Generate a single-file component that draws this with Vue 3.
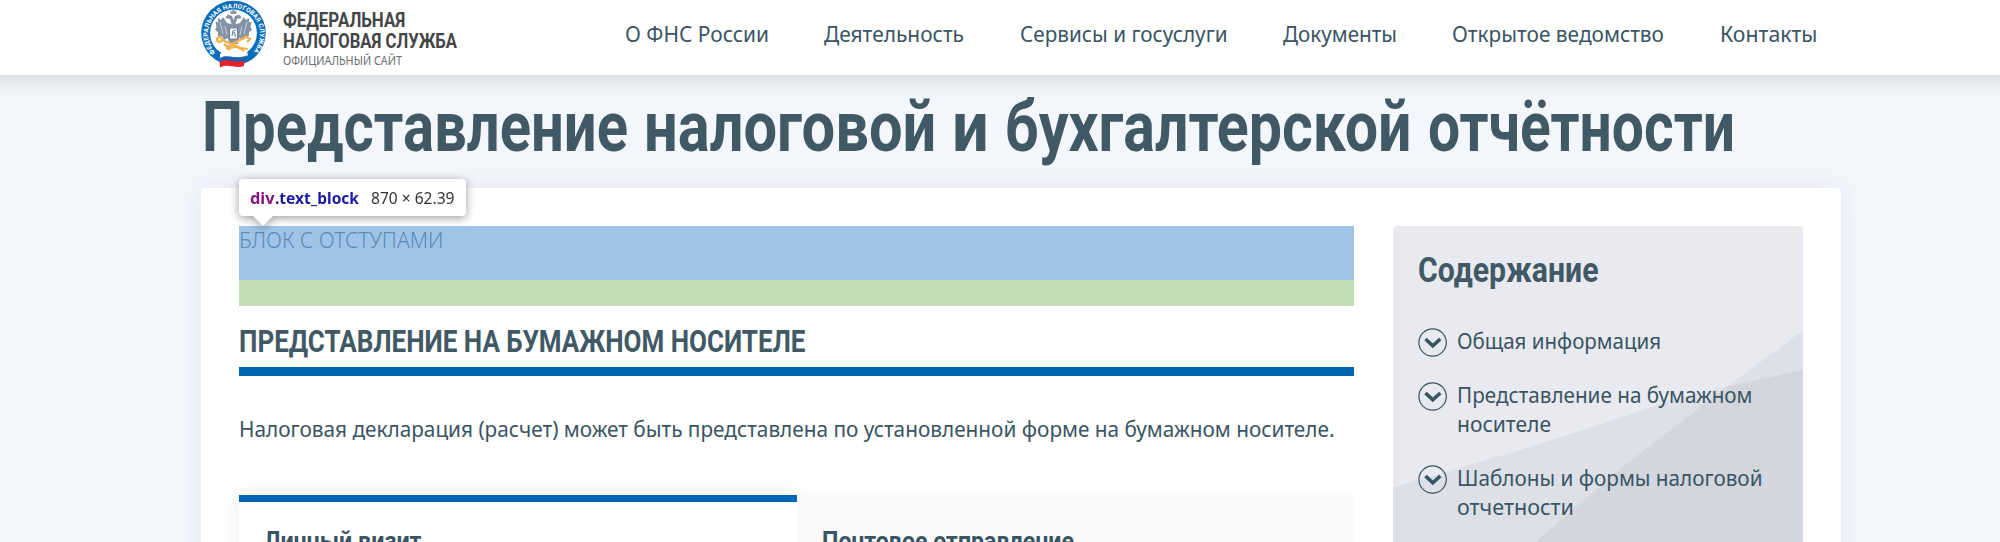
<script setup>
import { h } from 'vue'

// One line of text set to an exact measure
const FitText = (props) =>
  h('svg', { class: 'fit', width: props.w, height: props.h }, [
    h('text', {
      x: 0,
      y: props.base,
      'font-size': props.size,
      textLength: props.w,
      lengthAdjust: 'spacingAndGlyphs'
    }, props.text)
  ])
FitText.props = ['w', 'h', 'base', 'size', 'text']

const nav = [
  { text: 'О ФНС России', w: 144 },
  { text: 'Деятельность', w: 140 },
  { text: 'Сервисы и госуслуги', w: 207.6 },
  { text: 'Документы', w: 114 },
  { text: 'Открытое ведомство', w: 212 },
  { text: 'Контакты', w: 97.5 }
]

const titleWords = [
  { text: 'Представление', w: 426 },
  { text: 'налоговой', w: 292.3 },
  { text: 'и', w: 36.8 },
  { text: 'бухгалтерской', w: 406.5 },
  { text: 'отчётности', w: 307 }
]

const contents = [
  { lines: [{ text: 'Общая информация', w: 204 }] },
  { lines: [{ text: 'Представление на бумажном', w: 295.5 }, { text: 'носителе', w: 94 }] },
  { lines: [{ text: 'Шаблоны и формы налоговой', w: 305.5 }, { text: 'отчетности', w: 117 }] }
]
</script>

<template>
  <div class="page">
    <header class="header">
      <svg class="emblem" width="66" height="70" viewBox="0 0 66 70">
        <defs>
          <path id="ring" d="M14.5 52.5 A26 26 0 1 1 51.5 52.5" />
        </defs>
        <circle cx="32.5" cy="33" r="32.3" fill="#0a6fbb" />
        <circle cx="32.5" cy="33" r="23.4" fill="#fff" />
        <text class="ring-text" textLength="120" lengthAdjust="spacingAndGlyphs">
          <textPath href="#ring" textLength="120">ФЕДЕРАЛЬНАЯ НАЛОГОВАЯ СЛУЖБА</textPath>
        </text>
        <g fill="#8593a6">
          <path d="M30 24 L26 23 L22 17 L20 20 L17 18 L17 22 L14.5 22 L15.5 27 L14 30 L17 32 L17 36 L21 36 L23 40 L27 38 L28 44 L37 44 L38 38 L42 40 L44 36 L48 36 L48 32 L51 30 L49.5 27 L50.5 22 L48 22 L48 18 L45 20 L43 17 L39 23 L35 24 Z" />
          <path d="M31 26 L29 19 L24 18 L27 14.5 L31 16 L32.5 20 L34 16 L38 14.5 L41 18 L36 19 L34 26 Z" />
          <path d="M30 14 L29 10.5 L31 11.5 L32.5 9 L34 11.5 L36 10.5 L35 14 Z" />
        </g>
        <path d="M19 22 L22 34 M46 22 L43 34 M24 26 L26 35 M41 26 L39 35" stroke="#c8d0da" stroke-width="1" />
        <rect x="28.5" y="28" width="8" height="11" fill="#fff" stroke="#6f7f93" stroke-width="1" />
        <path d="M31 36 L32 31 L35 30 M33 32 L34.5 37" stroke="#7e8da0" stroke-width="1.3" fill="none" />
        <g fill="none" stroke="#efb04a" stroke-width="2.2">
          <circle cx="18.5" cy="39.5" r="2.4" />
          <path d="M21 40 L40 48 L47 49 M25 49 L31 44 L45 37 M27 50 C31 46 37 46 43 51 M44 36 L49 39 L46 42 M23 44 L29 48" />
        </g>
        <path d="M19 54 C26 48 34 57 46 51 L47 56 C39 61 30 53 19 59 Z" fill="#fff" />
        <path d="M19 58 C27 53 35 61 46.5 55 L46.5 60 C37 65 29 57 19 62.5 Z" fill="#1b62ae" />
        <path d="M18.5 62 C27 57 35 64 43.5 60.5 L43 66 C34 69 27 63 19 67.5 Z" fill="#e8202b" />
      </svg>
      <div class="brand">
        <FitText class="brand-name" text="ФЕДЕРАЛЬНАЯ" :w="122.3" :h="21" :base="14.7" :size="19.7" />
        <FitText class="brand-name" text="НАЛОГОВАЯ СЛУЖБА" :w="174" :h="22" :base="14.7" :size="19.7" />
        <FitText class="brand-note" text="ОФИЦИАЛЬНЫЙ САЙТ" :w="119" :h="14" :base="9.5" :size="11.8" />
      </div>
      <nav class="nav">
        <a v-for="item in nav" :key="item.text">
          <FitText :text="item.text" :w="item.w" :h="34" :base="23.6" :size="21.8" />
        </a>
      </nav>
    </header>

    <h1 class="title">
      <FitText v-for="word in titleWords" :key="word.text" :text="word.text" :w="word.w" :h="113" :base="75.7" :size="70" />
    </h1>

    <main class="card">
      <section class="main">
        <div class="text-block">
          <FitText text="БЛОК С ОТСТУПАМИ" :w="204.500" :h="34" :base="22" :size="21.8" />
          <div class="tooltip">
            <FitText class="tag" text="div" :w="24.5" :h="36" :base="25.300" :size="16.3" />
            <FitText class="cls" text=".text_block" :w="84" :h="36" :base="25.300" :size="16.3" />
            <FitText class="dims" text="870 × 62.39" :w="83.5" :h="36" :base="25.300" :size="16.3" />
          </div>
        </div>
        <div class="block-margin"></div>
        <h2 class="subtitle">
          <FitText text="ПРЕДСТАВЛЕНИЕ НА БУМАЖНОМ НОСИТЕЛЕ" :w="566.5" :h="61" :base="45.7" :size="32" />
        </h2>
        <p class="para">
          <FitText
            text="Налоговая декларация (расчет) может быть представлена по установленной форме на бумажном носителе."
            :w="1095.500" :h="119" :base="60.5" :size="21.8"
          />
        </p>
        <div class="tabs">
          <div class="tab active">
            <FitText text="Личный визит" :w="157.5" :h="40" :base="26.500" :size="26" />
          </div>
          <div class="tab">
            <FitText text="Почтовое отправление" :w="252" :h="40" :base="26.500" :size="26" />
          </div>
        </div>
      </section>

      <aside class="side">
        <svg class="facets" width="410" height="316" viewBox="0 0 410 316">
          <path d="M0 261.500 L50 247 L120 226 L200 201 L285 172 L335 160 L410 104.500 V316 H0 Z" fill="#dde0e7" />
          <path d="M142.500 316 L227 243 L310 179 L335 160 L410 144 V316 Z" fill="#d3d6dd" />
        </svg>
        <h3 class="side-title">
          <FitText text="Содержание" :w="180.5" :h="50" :base="37.3" :size="35" />
        </h3>
        <ul class="contents">
          <li v-for="item in contents" :key="item.lines[0].text">
            <svg class="chevron" width="30" height="29" viewBox="0 0 30 29">
              <circle cx="14.6" cy="14.5" r="13.7" />
              <path d="M7.5 11 L14.8 17.8 L22.3 11" />
            </svg>
            <div class="lines">
              <FitText v-for="line in item.lines" :key="line.text" :text="line.text" :w="line.w" :h="29" :base="21" :size="21.8" />
            </div>
          </li>
        </ul>
      </aside>
    </main>
  </div>
</template>

<style>
html, body { margin: 0; overflow: hidden; }
</style>

<style scoped>
.page {
  width: 2000px;
  height: 542px;
  overflow: hidden;
  background: #f3f7fc;
  color: #395463;
  font-family: "Noto Sans", sans-serif;
}
.fit { display: block; flex: none; overflow: visible; fill: currentColor; }
.header {
  position: relative;
  display: flex;
  height: 75px;
  padding-left: 201px;
  background: #fff;
  box-shadow: 0 -20px 26px 20px rgba(0, 0, 0, 0.17);
}
.emblem { flex: none; }
.ring-text { font: 700 6.5px "Roboto", sans-serif; fill: #fff; }
.brand { width: 342px; padding: 12px 0 0 16px; }
.brand-name { font-family: "Roboto", sans-serif; font-weight: 700; color: #434547; }
.brand-note { color: #6b6c6e; }
.nav { display: flex; gap: 55.4px; padding-top: 18px; }
.title, .subtitle, .side-title { margin: 0; font-family: "Roboto", sans-serif; font-weight: 700; color: #415865; }
.title { display: flex; gap: 16px; padding-left: 202px; }
.card {
  display: flex;
  gap: 39px;
  width: 1564px;
  height: 354px;
  margin-left: 201px;
  padding: 38px 38px 0;
  background: #fff;
  border-radius: 4px;
  box-shadow: 0 0 26px rgba(40, 40, 90, 0.07);
}
.main { width: 1115px; flex: none; }
.text-block { position: relative; height: 54px; background: #a0c4e8; color: #5a8ab3; font-weight: 300; }
.block-margin { height: 25.5px; background: #c3deb7; }
.tooltip {
  position: absolute;
  left: 0;
  top: -47.5px;
  display: flex;
  box-sizing: border-box;
  width: 227px;
  height: 37px;
  padding-left: 11px;
  background: #fff;
  border-radius: 4px;
  font-weight: 400;
  filter: drop-shadow(0 2px 5px rgba(0, 0, 0, 0.4));
}
.tooltip::after {
  content: "";
  position: absolute;
  left: 14px;
  top: 37px;
  border: 10px solid transparent;
  border-bottom: 0;
  border-top-color: #fff;
}
.tag { color: #881280; font-weight: 700; }
.cls { color: #1a1aa6; font-weight: 700; }
.dims { margin-left: 12px; color: #303438; }
.subtitle { height: 61.5px; border-bottom: 9px solid #0066b3; }
.para { margin: 0; height: 119px; }
.tabs { display: flex; height: 60px; }
.tab { position: relative; flex: 1; padding: 28px 0 0 25px; background: #fafafa; font-family: "Roboto", sans-serif; font-weight: 700; }
.tab.active {
  position: static;
  border-top: 7px solid #0066b3;
  padding-top: 21px;
  background: #fff;
  box-shadow: 0 0 26px rgba(0, 0, 0, 0.07);
}
.side { position: relative; width: 410px; height: 316px; background: #e8eaef; border-radius: 4px 4px 0 0; overflow: hidden; }
.facets { position: absolute; left: 0; top: 0; }
.side-title { position: relative; padding: 19px 0 0 25px; }
.contents { position: relative; display: flex; flex-direction: column; gap: 25px; margin: 0; padding: 32.5px 0 0 25px; list-style: none; }
.contents li { display: flex; gap: 9px; }
.chevron { flex: none; fill: none; stroke: #395463; }
.chevron circle { stroke-width: 1.2; }
.chevron path { stroke-width: 3.6; }
</style>
